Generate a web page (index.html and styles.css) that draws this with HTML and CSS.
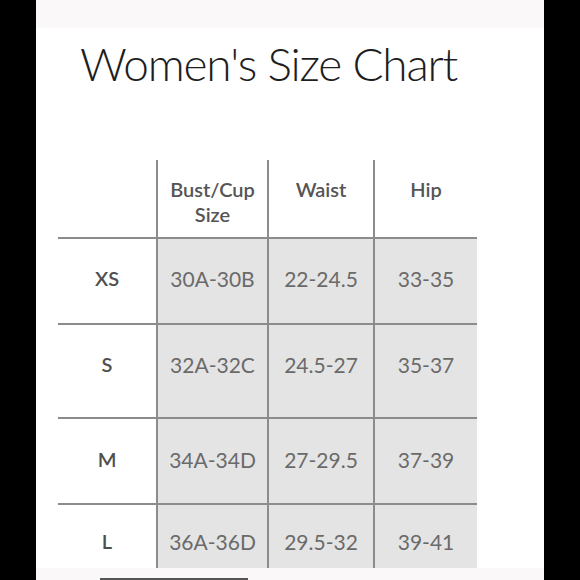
FILE: index.html
```html
<!DOCTYPE html>
<html>
<head>
<meta charset="utf-8">
<link rel="stylesheet" href="styles.css">
</head>
<body>
<div class="frame">
  <div class="top-strip"></div>
  <div class="card">
    <h1 class="title">Women's Size Chart</h1>
    <div class="chart">
      <div class="cell head corner"></div>
      <div class="cell head col">Bust/Cup<br>Size</div>
      <div class="cell head col">Waist</div>
      <div class="cell head col">Hip</div>

      <div class="cell label r1">XS</div>
      <div class="cell data r1">30A-30B</div>
      <div class="cell data r1">22-24.5</div>
      <div class="cell data r1">33-35</div>

      <div class="cell label r2">S</div>
      <div class="cell data r2">32A-32C</div>
      <div class="cell data r2">24.5-27</div>
      <div class="cell data r2">35-37</div>

      <div class="cell label r3">M</div>
      <div class="cell data r3">34A-34D</div>
      <div class="cell data r3">27-29.5</div>
      <div class="cell data r3">37-39</div>

      <div class="cell label r4">L</div>
      <div class="cell data r4">36A-36D</div>
      <div class="cell data r4">29.5-32</div>
      <div class="cell data r4">39-41</div>
    </div>
  </div>
  <div class="bottom-strip"><div class="bar"></div></div>
</div>
</body>
</html>
```
FILE: styles.css
```css
html, body {
  margin: 0;
  padding: 0;
  background: #000;
  height: 580px;
  overflow: hidden;
}
.frame {
  width: 508px;
  margin: 0 auto;
  height: 580px;
  display: flex;
  flex-direction: column;
  background: #faf8f8;
}
.top-strip {
  height: 28px;
  flex: none;
  background: #faf8f8;
}
.card {
  height: 540px;
  flex: none;
  background: #fff;
  overflow: hidden;
}
.title {
  margin: 0;
  padding: 7px 0 0 44px;
  font-family: Lato, sans-serif;
  font-weight: 300;
  font-size: 46px;
  line-height: 58px;
  color: #1e1e1e;
  letter-spacing: -1.2px;
}
.chart {
  margin: 67px 0 0 22px;
  display: grid;
  grid-template-columns: 98px 111px 106px 104px;
  grid-template-rows: 77px 86px 94px 86px 86px;
  font-family: Lato, sans-serif;
}
.cell {
  display: flex;
  align-items: center;
  justify-content: center;
  text-align: center;
  font-size: 21px;
}
.head {
  align-items: flex-start;
  padding-top: 17px;
  font-weight: 600;
  font-size: 20px;
  line-height: 25px;
  color: #555;
}
.head.col {
  border-left: 2px solid #8c8c8c;
}
.label {
  border-top: 2px solid #8c8c8c;
  font-weight: 600;
  color: #4f4f4f;
  font-size: 20px;
}
.data {
  border-top: 2px solid #8c8c8c;
  border-left: 2px solid #8c8c8c;
  background: #e4e4e4;
  color: #6a6a6a;
}
.r1 {
  padding-bottom: 6px;
}
.r2 {
  padding-bottom: 14px;
}
.r3 {
  padding-bottom: 4px;
}
.r4 {
  align-items: flex-start;
  padding-top: 24px;
}
.bottom-strip {
  flex: 1;
  background: #faf8f8;
  display: flex;
  align-items: flex-end;
  padding-left: 64px;
}
.bar {
  width: 148px;
  height: 2px;
  background: #555;
}
```
